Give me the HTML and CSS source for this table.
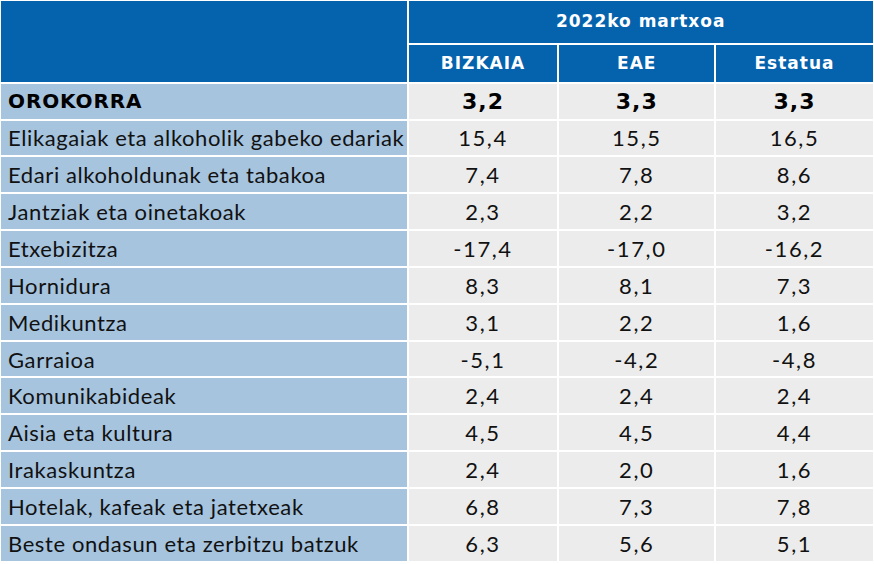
FILE: index.html
```html
<!DOCTYPE html>
<html lang="eu">
<head>
<meta charset="utf-8">
<title>KPI 2022ko martxoa</title>
<link rel="stylesheet" href="styles.css">
</head>
<body>
<div class="table">
  <div class="hd corner"></div>
  <div class="hd period">2022ko martxoa</div>
  <div class="hd sub">BIZKAIA</div>
  <div class="hd sub">EAE</div>
  <div class="hd sub">Estatua</div>

  <div class="lbl total">OROKORRA</div><div class="num total">3,2</div><div class="num total">3,3</div><div class="num total">3,3</div>
  <div class="lbl">Elikagaiak eta alkoholik gabeko edariak</div><div class="num">15,4</div><div class="num">15,5</div><div class="num">16,5</div>
  <div class="lbl">Edari alkoholdunak eta tabakoa</div><div class="num">7,4</div><div class="num">7,8</div><div class="num">8,6</div>
  <div class="lbl">Jantziak eta oinetakoak</div><div class="num">2,3</div><div class="num">2,2</div><div class="num">3,2</div>
  <div class="lbl">Etxebizitza</div><div class="num">-17,4</div><div class="num">-17,0</div><div class="num">-16,2</div>
  <div class="lbl">Hornidura</div><div class="num">8,3</div><div class="num">8,1</div><div class="num">7,3</div>
  <div class="lbl">Medikuntza</div><div class="num">3,1</div><div class="num">2,2</div><div class="num">1,6</div>
  <div class="lbl">Garraioa</div><div class="num">-5,1</div><div class="num">-4,2</div><div class="num">-4,8</div>
  <div class="lbl">Komunikabideak</div><div class="num">2,4</div><div class="num">2,4</div><div class="num">2,4</div>
  <div class="lbl">Aisia eta kultura</div><div class="num">4,5</div><div class="num">4,5</div><div class="num">4,4</div>
  <div class="lbl">Irakaskuntza</div><div class="num">2,4</div><div class="num">2,0</div><div class="num">1,6</div>
  <div class="lbl">Hotelak, kafeak eta jatetxeak</div><div class="num">6,8</div><div class="num">7,3</div><div class="num">7,8</div>
  <div class="lbl">Beste ondasun eta zerbitzu batzuk</div><div class="num">6,3</div><div class="num">5,6</div><div class="num">5,1</div>
</div>
</body>
</html>
```

FILE: styles.css
```css
html, body {
  margin: 0;
  padding: 0;
  background: #ffffff;
}

.table {
  display: grid;
  grid-template-columns: 405.7px 148.6px 155px 156.4px;
  grid-template-rows: 41.7px 37px repeat(13, 34.85px);
  gap: 2px;
  padding: 1px 0 0 1px;
  font-family: Lato, "Noto Sans", sans-serif;
  color: #111111;
}

.hd {
  background: #0563ae;
  color: #ffffff;
  font-family: "DejaVu Sans", Lato, sans-serif;
  font-weight: 700;
  display: flex;
  align-items: center;
  justify-content: center;
}

.corner {
  grid-row: 1 / span 2;
}

.period {
  grid-column: 2 / span 3;
  font-size: 17px;
  letter-spacing: 1px;
  padding-bottom: 1px;
}

.sub {
  font-size: 17px;
  letter-spacing: 1px;
}

.lbl {
  background: #a6c4de;
  display: flex;
  align-items: center;
  padding-left: 7px;
  font-size: 22px;
  letter-spacing: 0.6px;
  white-space: nowrap;
}

.num {
  background: #ececec;
  display: flex;
  align-items: center;
  justify-content: center;
  font-size: 22px;
  letter-spacing: 1.6px;
}

.lbl.total {
  font-family: "DejaVu Sans", Lato, sans-serif;
  font-weight: 700;
  font-size: 20px;
  letter-spacing: 0.9px;
  color: #000000;
}

.num.total {
  font-family: "DejaVu Sans", Lato, sans-serif;
  font-weight: 700;
  font-size: 22px;
  letter-spacing: 1px;
  color: #000000;
}
```
